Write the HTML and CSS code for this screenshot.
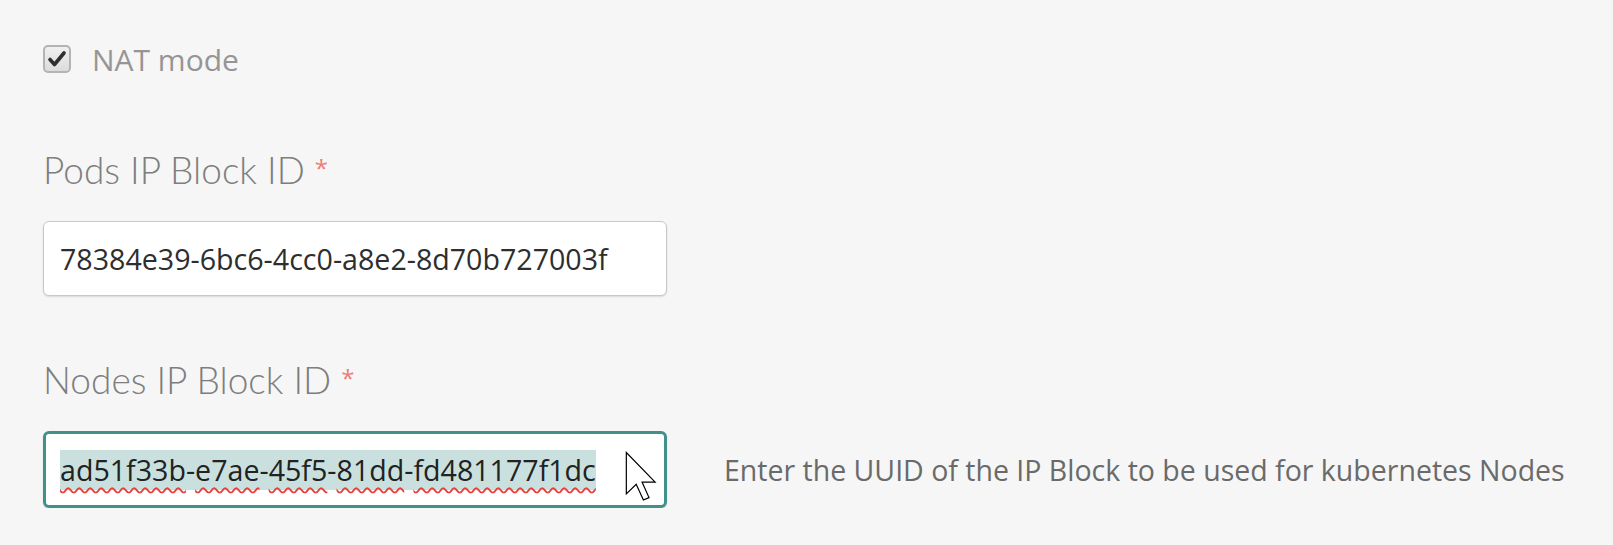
FILE: index.html
```html
<!DOCTYPE html>
<html lang="en">
<head>
<meta charset="utf-8">
<title>IP Block settings</title>
<link rel="stylesheet" href="styles.css">
</head>
<body>
<main class="form">
  <div class="check-row">
    <span class="checkbox">
      <svg width="20" height="20" viewBox="0 0 20 20"><path d="M3 10.5 L7.5 15.5 L17 4" fill="none" stroke="#2f2f2f" stroke-width="3.6" stroke-linecap="round" stroke-linejoin="round"/></svg>
    </span>
    <span class="check-label">NAT mode</span>
  </div>

  <div class="field first">
    <label class="label">Pods IP Block ID <span class="req">*</span></label>
    <div class="row">
      <div class="input"><span class="value">78384e39-6bc6-4cc0-a8e2-8d70b727003f</span></div>
    </div>
  </div>

  <div class="field">
    <label class="label">Nodes IP Block ID <span class="req">*</span></label>
    <div class="row">
      <div class="input focused">
        <span class="value sel"><span class="sp">ad51f33b</span>-<span class="sp">e7ae</span>-<span class="sp">45f5</span>-<span class="sp">81dd</span>-<span class="sp">fd481177f1dc</span></span>
        <svg class="pointer" width="32" height="51" viewBox="0 0 12 19"><path d="M0.5 0.5 L0.5 16 L4.2 12.4 L6.9 18.3 L9 17.4 L6.4 11.6 L11.3 11.6 Z" fill="#fff" stroke="#000" stroke-width="0.45" stroke-linejoin="miter"/></svg>
      </div>
      <p class="help">Enter the UUID of the IP Block to be used for kubernetes Nodes</p>
    </div>
  </div>
</main>
</body>
</html>
```

FILE: styles.css
```css
html, body {
  margin: 0;
  padding: 0;
  background: #f6f6f6;
}

.form {
  padding: 45px 0 0 43px;
}

.check-row {
  display: flex;
  align-items: center;
  gap: 21px;
  height: 28px;
}

.checkbox {
  box-sizing: border-box;
  width: 28px;
  height: 28px;
  border: 2px solid #b4b4b4;
  border-radius: 5px;
  background: linear-gradient(#f0f0f0, #dcdcdc);
  display: flex;
  align-items: center;
  justify-content: center;
}

.check-label {
  font-family: "Open Sans", sans-serif;
  font-size: 30px;
  color: #959595;
  line-height: 28px;
  padding-top: 2px;
}

.field {
  margin-top: 62px;
}

.field.first {
  margin-top: 75px;
}

.label {
  display: block;
  font-family: Lato, sans-serif;
  font-weight: 300;
  font-size: 37px;
  line-height: 44px;
  color: #7e7e7e;
}

.req {
  color: #f07c76;
  font-family: "Open Sans", sans-serif;
  font-weight: 400;
  font-size: 24px;
  line-height: 1;
  vertical-align: top;
  position: relative;
  top: 8px;
}

.row {
  display: flex;
  align-items: center;
  gap: 57px;
  margin-top: 29px;
}

.input {
  position: relative;
  box-sizing: border-box;
  width: 624px;
  height: 75px;
  background: #fff;
  border: 1px solid #c9c9c9;
  border-radius: 6px;
  box-shadow: 0 1px 2px rgba(0, 0, 0, 0.12);
  display: flex;
  align-items: center;
  padding-left: 16px;
}

.input.focused {
  height: 77px;
  border: 3px solid #3f9189;
  padding-left: 14px;
}

.value {
  font-family: "Open Sans", sans-serif;
  font-size: 28.6px;
  line-height: 40px;
  color: #2e2e2e;
  white-space: nowrap;
}

.value.sel {
  background: #cae0de;
  color: #222;
}

.sp {
  text-decoration: underline wavy #e8403a;
  text-decoration-thickness: 1.5px;
  text-underline-offset: 6px;
  text-decoration-skip-ink: none;
}

.pointer {
  position: absolute;
  left: 579px;
  top: 17px;
}

.help {
  margin: 0;
  font-family: "Open Sans", sans-serif;
  font-size: 28.5px;
  color: #6a6a6a;
  white-space: nowrap;
}
```
